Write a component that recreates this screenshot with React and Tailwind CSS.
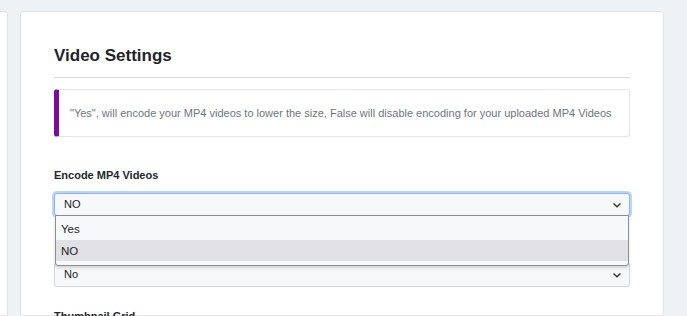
export default function App() {
  return (
    <div
      className="h-[316px] w-[687px] overflow-hidden bg-[#eef2f5] flex gap-[12px] pt-[11px]"
      style={{ fontFamily: '"Liberation Sans", Arial, sans-serif' }}
    >
      {/* partial card on the left */}
      <div className="w-[8px] shrink-0 bg-white border border-l-0 border-[#dfe3e7] rounded-tr-[3px]"></div>

      {/* main card */}
      <div className="w-[644px] shrink-0 bg-white border border-[#dfe3e7] rounded-[3px] px-[33px] pt-[34px]">
        <h2 className="text-[17px] leading-[20px] font-bold text-[#1f242b]">Video Settings</h2>
        <div className="mt-[11px] h-px bg-[#dcdcdc]"></div>

        {/* info callout */}
        <div className="mt-[11px] border border-[#e3e5e8] border-l-[5px] border-l-[#7a0c9c] rounded-[3px] pl-[11px] pr-3 py-[15px]">
          <p className="text-[11px] leading-[16px] text-[#6e7580]">
            "Yes", will encode your MP4 videos to lower the size, False will disable encoding for your uploaded MP4 Videos
          </p>
        </div>

        <div className="mt-[31px] text-[11px] leading-[14px] font-bold text-[#23272d]">Encode MP4 Videos</div>

        {/* select + open list */}
        <div className="relative mt-[11px]">
          <div className="h-[23px] flex items-center justify-between bg-[#f7f8fa] border border-[#8db4ee] rounded-[3px] ring-2 ring-[#bcd4fa] pl-[9px] pr-[7px]">
            <span className="text-[11px] text-[#222]">NO</span>
            <svg width="10" height="10" viewBox="0 0 10 10" fill="none">
              <path d="M1.5 3.5 L5 6.8 L8.5 3.5" stroke="#333" strokeWidth="1.4" />
            </svg>
          </div>

          <div className="absolute left-[1px] right-[1px] top-[22px] z-10 bg-[#f7f8fa] border border-[#8e8e8e] rounded-b-[3px] shadow-[0_2px_3px_rgba(0,0,0,0.15)] pb-[4px]">
            <div className="h-[24px] flex items-center pl-[5px] pt-[3px] text-[11.5px] text-[#222]">Yes</div>
            <div className="h-[21px] flex items-center pl-[5px] pt-[2px] text-[11.5px] text-[#222] bg-[#e1e0e5]">NO</div>
          </div>
        </div>

        {/* covered label */}
        <div className="mt-[21px] text-[11px] leading-[14px] font-bold text-[#23272d]">&nbsp;</div>
        <div className="mt-[11px] h-[25px] flex items-center justify-between bg-[#f7f8fa] border border-[#d3d6da] rounded-[3px] pl-[9px] pr-[7px]">
          <span className="text-[11px] text-[#222]">No</span>
          <svg width="10" height="10" viewBox="0 0 10 10" fill="none">
            <path d="M1.5 3.5 L5 6.8 L8.5 3.5" stroke="#333" strokeWidth="1.4" />
          </svg>
        </div>

        <div className="mt-[22px] text-[11px] leading-[14px] font-bold text-[#23272d]">Thumbnail Grid</div>
      </div>
    </div>
  );
}
